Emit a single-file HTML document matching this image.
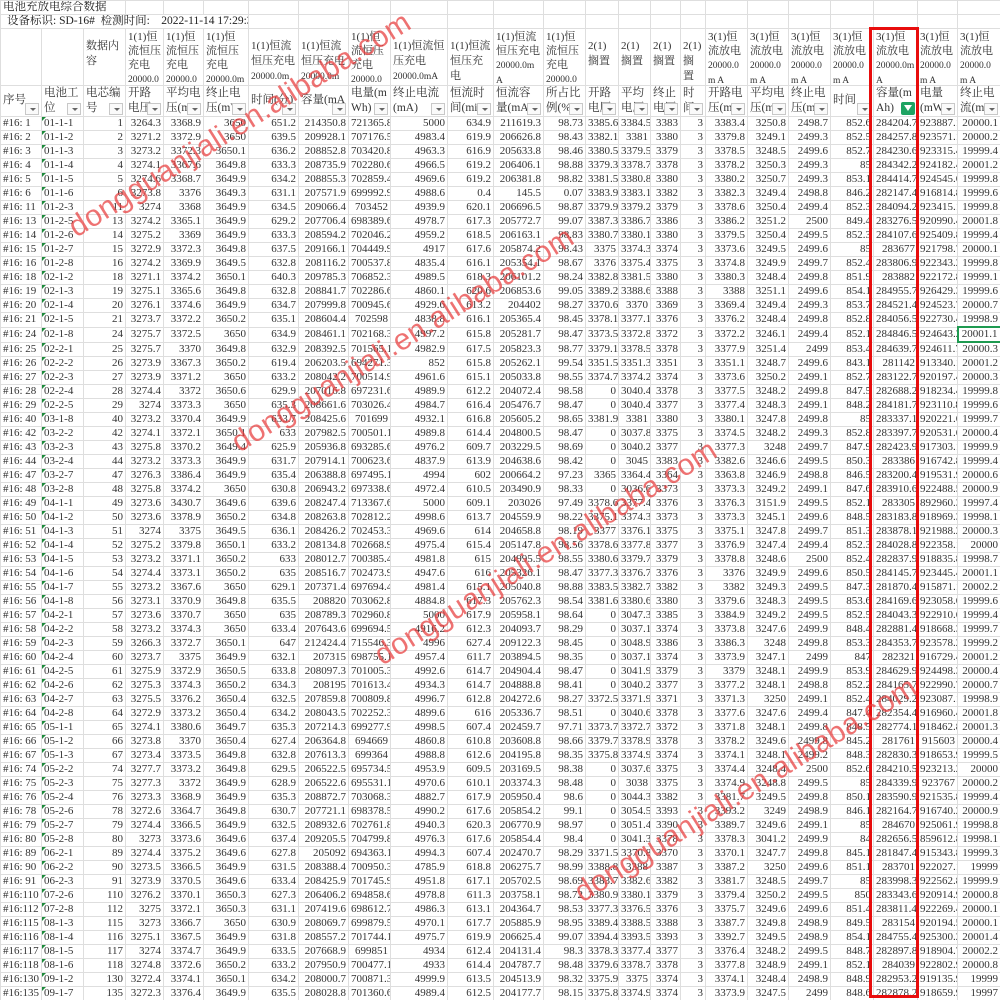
<!DOCTYPE html>
<html><head><meta charset="utf-8">
<style>
html,body{margin:0;padding:0;background:#fff;width:1000px;height:1000px;overflow:hidden;position:relative}
table{border-collapse:collapse;table-layout:fixed;position:absolute;left:0;top:0;width:1000px}
td{border:1px solid #dedede;padding:0 2px;font:11px "Liberation Serif","Noto Serif CJK SC",serif;color:#333;white-space:nowrap;overflow:hidden;text-align:right;height:14px;box-sizing:border-box;line-height:13px}
tr.t td{text-align:left;font-size:11.5px;color:#222;height:14px}
tr.h1 td{height:57px;padding:0 2px;vertical-align:top;text-align:left}
tr.h1 td div{height:56px;overflow:hidden;white-space:normal;word-break:break-all;font-size:11px;line-height:14px;padding-top:1px;box-sizing:border-box}
tr.h1 td div.m{padding-top:10px;line-height:15px}
tr.h1 td div small{font-size:9.5px}
tr.h2 td{height:31px;padding:0 2px;vertical-align:top;text-align:left}
tr.h2 td div{height:30px;overflow:hidden;position:relative;white-space:normal;word-break:break-all;font-size:11.5px;line-height:15px;padding-top:0}
tr.h2 td div.m{line-height:29px}
.f{position:absolute;right:0;bottom:1px;width:14px;height:12px;border:1px solid #c8c8c8;background:#fafafa;box-sizing:border-box}
.f:after{content:"";position:absolute;left:4px;top:4px;border-left:3px solid transparent;border-right:3px solid transparent;border-top:3px solid #666}
.g{position:absolute;right:0;bottom:1px;width:14px;height:13px;background:#1ea362;border-radius:2px}
.g:after{content:"";position:absolute;left:3px;top:3px;border-left:4px solid transparent;border-right:4px solid transparent;border-top:6px solid #fff}
td.l{text-align:left}
td.p{text-align:left;position:relative}
td.p:before{content:"";position:absolute;left:0;top:0;border-top:4px solid #1c8a3a;border-right:4px solid transparent}
.red{position:absolute;left:869px;top:27px;width:50px;height:971px;border:3px solid #e80d0d;box-sizing:border-box}
.wm{position:absolute;font:30px "Liberation Sans",sans-serif;color:rgba(232,60,60,0.72);white-space:nowrap;transform:translate(-50%,-50%) rotate(-32deg);letter-spacing:0.3px}
</style></head><body>
<table>
<colgroup><col style="width:41px"><col style="width:42px"><col style="width:42px"><col style="width:38px"><col style="width:40px"><col style="width:45px"><col style="width:50px"><col style="width:50px"><col style="width:42px"><col style="width:57px"><col style="width:46px"><col style="width:50px"><col style="width:42px"><col style="width:33px"><col style="width:32px"><col style="width:30px"><col style="width:25px"><col style="width:42px"><col style="width:41px"><col style="width:42px"><col style="width:43px"><col style="width:44px"><col style="width:40px"><col style="width:43px"></colgroup>
<tr class="t"><td colspan="3" style="border-right:none">电池充放电综合数据</td><td></td><td></td><td></td><td></td><td></td><td></td><td></td><td></td><td></td><td></td><td></td><td></td><td></td><td></td><td></td><td></td><td></td><td></td><td></td><td></td><td></td></tr>
<tr class="t"><td colspan="6" style="padding-left:6px">设备标识: SD-16#&nbsp; 检测时间: &nbsp;&nbsp; 2022-11-14 17:29:39</td><td></td><td></td><td></td><td></td><td></td><td></td><td></td><td></td><td></td><td></td><td></td><td></td><td></td><td></td><td></td><td></td><td></td><td></td></tr>
<tr class="h1"><td><div></div></td><td><div></div></td><td><div class="m">数据内容</div></td><td><div>1(1)恒流恒压充电<br><small>20000.0</small></div></td><td><div>1(1)恒流恒压充电<br><small>20000.0</small></div></td><td><div>1(1)恒流恒压充电<br><small>20000.0m A</small></div></td><td><div class="m">1(1)恒流恒压充电<br><small>20000.0mA</small></div></td><td><div class="m">1(1)恒流恒压充电<br><small>20000.0mA</small></div></td><td><div>1(1)恒流恒压充电<br><small>20000.0m</small></div></td><td><div class="m">1(1)恒流恒压充电<br><small>20000.0mA</small></div></td><td><div class="m">1(1)恒流恒压充电<br><small>20000.0mA</small></div></td><td><div>1(1)恒流恒压充电<br><small>20000.0m A</small></div></td><td><div>1(1)恒流恒压充电<br><small>20000.0m</small></div></td><td><div class="m">2(1)搁置</div></td><td><div class="m">2(1)搁置</div></td><td><div class="m">2(1)搁置</div></td><td><div class="m">2(1)搁置</div></td><td><div>3(1)恒流放电<br><small>20000.0m A</small></div></td><td><div>3(1)恒流放电<br><small>20000.0m A</small></div></td><td><div>3(1)恒流放电<br><small>20000.0m A</small></div></td><td><div>3(1)恒流放电<br><small>20000.0m A</small></div></td><td><div>3(1)恒流放电<br><small>20000.0m A</small></div></td><td><div>3(1)恒流放电<br><small>20000.0m A</small></div></td><td><div>3(1)恒流放电<br><small>20000.0m A</small></div></td></tr>
<tr class="h2"><td><div class="m">序号<i class="f"></i></div></td><td><div>电池工位<i class="f"></i></div></td><td><div>电芯编号<i class="f"></i></div></td><td><div>开路电压(mV)<i class="f"></i></div></td><td><div>平均电压(mV)<i class="f"></i></div></td><td><div>终止电压(mV)<i class="f"></i></div></td><td><div class="m">时间(分)<i class="f"></i></div></td><td><div class="m">容量(mAh)<i class="f"></i></div></td><td><div>电量(mWh)<i class="f"></i></div></td><td><div>终止电流(mA)<i class="f"></i></div></td><td><div>恒流时间(min)<i class="f"></i></div></td><td><div>恒流容量(mAh)<i class="f"></i></div></td><td><div>所占比例(%)<i class="f"></i></div></td><td><div>开路电压<i class="f"></i></div></td><td><div>平均电压<i class="f"></i></div></td><td><div>终止电压<i class="f"></i></div></td><td><div>时间(分)<i class="f"></i></div></td><td><div>开路电压(mV)<i class="f"></i></div></td><td><div>平均电压(mV)<i class="f"></i></div></td><td><div>终止电压(mV)<i class="f"></i></div></td><td><div class="m">时间(分)<i class="f"></i></div></td><td><div>容量(mAh)<i class="g"></i></div></td><td><div>电量(mWh)<i class="f"></i></div></td><td><div>终止电流(mA)<i class="f"></i></div></td></tr>
<tr><td class="l">#16: 1<td class="p">01-1-1<td>1<td>3264.3<td>3368.9<td>3650<td>651.2<td>214350.8<td>721365.8<td>5000<td>634.9<td>211619.3<td>98.73<td>3385.6<td>3384.5<td>3383<td>3<td>3383.4<td>3250.8<td>2498.7<td>852.6<td>284204.7<td>923887.1<td>20000.1</tr>
<tr><td class="l">#16: 2<td class="p">01-1-2<td>2<td>3271.2<td>3372.9<td>3650<td>639.5<td>209928.1<td>707176.5<td>4983.4<td>619.9<td>206626.8<td>98.43<td>3382.1<td>3381<td>3380<td>3<td>3379.8<td>3249.1<td>2499.3<td>852.5<td>284257.8<td>923571.1<td>20000.2</tr>
<tr><td class="l">#16: 3<td class="p">01-1-3<td>3<td>3273.2<td>3372.3<td>3650.1<td>636.2<td>208852.8<td>703420.8<td>4963.3<td>616.9<td>205633.8<td>98.46<td>3380.5<td>3379.5<td>3379<td>3<td>3378.5<td>3248.5<td>2499.6<td>852.7<td>284230.6<td>923315.4<td>19999.4</tr>
<tr><td class="l">#16: 4<td class="p">01-1-4<td>4<td>3274.1<td>3367.6<td>3649.8<td>633.3<td>208735.9<td>702280.6<td>4966.5<td>619.2<td>206406.1<td>98.88<td>3379.3<td>3378.7<td>3378<td>3<td>3378.2<td>3250.3<td>2499.3<td>85<td>284342.2<td>924182.4<td>20001.2</tr>
<tr><td class="l">#16: 5<td class="p">01-1-5<td>5<td>3274.6<td>3368.7<td>3649.9<td>634.2<td>208855.3<td>702859.4<td>4969.6<td>619.2<td>206381.8<td>98.82<td>3381.5<td>3380.8<td>3380<td>3<td>3380.2<td>3250.7<td>2499.3<td>853.1<td>284414.7<td>924545.6<td>19999.8</tr>
<tr><td class="l">#16: 6<td class="p">01-1-6<td>6<td>3273.8<td>3376<td>3649.3<td>631.1<td>207571.9<td>699992.9<td>4988.6<td>0.4<td>145.5<td>0.07<td>3383.9<td>3383.1<td>3382<td>3<td>3382.3<td>3249.4<td>2498.8<td>846.2<td>282147.4<td>916814.8<td>19999.6</tr>
<tr><td class="l">#16: 11<td class="p">01-2-3<td>11<td>3274<td>3368<td>3649.9<td>634.5<td>209066.4<td>703452<td>4939.9<td>620.1<td>206696.5<td>98.87<td>3379.9<td>3379.2<td>3379<td>3<td>3378.6<td>3250.4<td>2499.4<td>852.3<td>284094.2<td>923415.1<td>19999.8</tr>
<tr><td class="l">#16: 13<td class="p">01-2-5<td>13<td>3274.2<td>3365.1<td>3649.9<td>629.2<td>207706.4<td>698389.6<td>4978.7<td>617.3<td>205772.7<td>99.07<td>3387.3<td>3386.7<td>3386<td>3<td>3386.2<td>3251.2<td>2500<td>849.4<td>283276.5<td>920990.4<td>20001.8</tr>
<tr><td class="l">#16: 14<td class="p">01-2-6<td>14<td>3275.2<td>3369<td>3649.9<td>633.3<td>208594.2<td>702046.2<td>4959.2<td>618.5<td>206163.1<td>98.83<td>3380.7<td>3380.1<td>3380<td>3<td>3379.5<td>3250.4<td>2499.5<td>852.3<td>284107.6<td>925409.8<td>19999.4</tr>
<tr><td class="l">#16: 15<td class="p">01-2-7<td>15<td>3272.9<td>3372.3<td>3649.8<td>637.5<td>209166.1<td>704449.9<td>4917<td>617.6<td>205874.2<td>98.43<td>3375<td>3374.3<td>3374<td>3<td>3373.6<td>3249.5<td>2499.6<td>85<td>283677<td>921798.7<td>20000.1</tr>
<tr><td class="l">#16: 16<td class="p">01-2-8<td>16<td>3274.2<td>3369.9<td>3649.5<td>632.8<td>208116.2<td>700537.8<td>4835.4<td>616.1<td>205354.1<td>98.67<td>3376<td>3375.4<td>3375<td>3<td>3374.8<td>3249.9<td>2499.7<td>852.4<td>283806.9<td>922343.2<td>19999.8</tr>
<tr><td class="l">#16: 18<td class="p">02-1-2<td>18<td>3271.1<td>3374.2<td>3650.1<td>640.3<td>209785.3<td>706852.3<td>4989.5<td>618.3<td>206101.2<td>98.24<td>3382.8<td>3381.5<td>3380<td>3<td>3380.3<td>3248.4<td>2499.8<td>851.9<td>283882<td>922172.8<td>19999.1</tr>
<tr><td class="l">#16: 19<td class="p">02-1-3<td>19<td>3275.1<td>3365.6<td>3649.8<td>632.8<td>208841.7<td>702286.6<td>4860.1<td>620.6<td>206853.6<td>99.05<td>3389.2<td>3388.6<td>3388<td>3<td>3388<td>3251.1<td>2499.6<td>854.1<td>284955.7<td>926429.3<td>19999.6</tr>
<tr><td class="l">#16: 20<td class="p">02-1-4<td>20<td>3276.1<td>3374.6<td>3649.9<td>634.7<td>207999.8<td>700945.6<td>4929.6<td>613.2<td>204402<td>98.27<td>3370.6<td>3370<td>3369<td>3<td>3369.4<td>3249.4<td>2499.3<td>853.7<td>284521.4<td>924523.7<td>20000.7</tr>
<tr><td class="l">#16: 21<td class="p">02-1-5<td>21<td>3273.7<td>3372.2<td>3650.2<td>635.1<td>208604.4<td>702598<td>4838.8<td>616.1<td>205365.4<td>98.45<td>3378.1<td>3377.1<td>3376<td>3<td>3376.2<td>3248.4<td>2499.8<td>852.8<td>284056.5<td>922730.4<td>19998.9</tr>
<tr><td class="l">#16: 24<td class="p">02-1-8<td>24<td>3275.7<td>3372.5<td>3650<td>634.9<td>208461.1<td>702168.3<td>4997.2<td>615.8<td>205281.7<td>98.47<td>3373.5<td>3372.8<td>3372<td>3<td>3372.2<td>3246.1<td>2499.4<td>852.1<td>284846.5<td>924643.2<td style="border:2px solid #1e9a50">20001.1</tr>
<tr><td class="l">#16: 25<td class="p">02-2-1<td>25<td>3275.7<td>3370<td>3649.8<td>632.9<td>208392.5<td>701565.1<td>4982.9<td>617.5<td>205823.3<td>98.77<td>3379.1<td>3378.5<td>3378<td>3<td>3377.9<td>3251.4<td>2499<td>853.4<td>284639.7<td>924611.7<td>20000.3</tr>
<tr><td class="l">#16: 26<td class="p">02-2-2<td>26<td>3273.9<td>3367.3<td>3650.2<td>619.4<td>206203.5<td>694271.3<td>852<td>615.8<td>205262.1<td>99.54<td>3351.5<td>3351.3<td>3351<td>3<td>3351.1<td>3248.7<td>2499.6<td>843.1<td>281142<td>913340.1<td>20001.2</tr>
<tr><td class="l">#16: 27<td class="p">02-2-3<td>27<td>3273.9<td>3371.2<td>3650<td>633.2<td>208042.2<td>700514.9<td>4961.6<td>615.1<td>205033.8<td>98.55<td>3374.7<td>3374.2<td>3374<td>3<td>3373.6<td>3250.2<td>2499.1<td>852.7<td>283122.7<td>920197.4<td>20000.3</tr>
<tr><td class="l">#16: 28<td class="p">02-2-4<td>28<td>3274.4<td>3372<td>3650.6<td>629.9<td>207016.8<td>697231.6<td>4989.9<td>612.2<td>204072.4<td>98.58<td>0<td>3040.4<td>3378<td>3<td>3377.5<td>3248.2<td>2499.8<td>847.5<td>282688.2<td>918234.4<td>19999.8</tr>
<tr><td class="l">#16: 29<td class="p">02-2-5<td>29<td>3274<td>3373.3<td>3650<td>635.3<td>208661.6<td>703026.4<td>4984.7<td>616.4<td>205476.7<td>98.47<td>0<td>3040.4<td>3377<td>3<td>3377.4<td>3248.3<td>2499.1<td>848.2<td>284181.7<td>923110.8<td>19999.6</tr>
<tr><td class="l">#16: 40<td class="p">03-1-8<td>40<td>3273.2<td>3370.4<td>3649.9<td>633.7<td>208425.6<td>701699<td>4932.1<td>616.8<td>205605.2<td>98.65<td>3381.9<td>3381<td>3380<td>3<td>3380.1<td>3247.8<td>2499.8<td>85<td>283337.1<td>920221.6<td>19999.7</tr>
<tr><td class="l">#16: 42<td class="p">03-2-2<td>42<td>3274.1<td>3372.1<td>3650.1<td>633<td>207982.5<td>700501.1<td>4989.8<td>614.4<td>204800.5<td>98.47<td>0<td>3037.8<td>3375<td>3<td>3374.5<td>3248.2<td>2499.3<td>852.8<td>283397.7<td>920531.6<td>20000.4</tr>
<tr><td class="l">#16: 43<td class="p">03-2-3<td>43<td>3275.8<td>3370.2<td>3649.4<td>625.9<td>205936.8<td>693285.6<td>4976.2<td>609.7<td>203229.5<td>98.69<td>0<td>3040.2<td>3377<td>3<td>3377.3<td>3248<td>2499.7<td>847.9<td>282423.9<td>917303.1<td>19999.9</tr>
<tr><td class="l">#16: 44<td class="p">03-2-4<td>44<td>3273.2<td>3373.3<td>3649.9<td>631.7<td>207914.1<td>700623.6<td>4837.9<td>613.9<td>204638.6<td>98.42<td>0<td>3045<td>3383<td>3<td>3382.6<td>3246.6<td>2499.5<td>850.3<td>283386<td>916742.8<td>19999.4</tr>
<tr><td class="l">#16: 47<td class="p">03-2-7<td>47<td>3276.3<td>3386.4<td>3649.9<td>635.4<td>206388.8<td>697495.1<td>4994<td>602<td>200664.2<td>97.23<td>3365<td>3364.4<td>3364<td>3<td>3363.8<td>3246.9<td>2498.8<td>846.5<td>283200.4<td>919531.9<td>20000.6</tr>
<tr><td class="l">#16: 48<td class="p">03-2-8<td>48<td>3275.8<td>3374.2<td>3650<td>630.8<td>206943.2<td>697338.6<td>4972.4<td>610.5<td>203490.9<td>98.33<td>0<td>3036.6<td>3373<td>3<td>3373.3<td>3249.2<td>2499.1<td>847.6<td>283910.6<td>922488.5<td>20000.9</tr>
<tr><td class="l">#16: 49<td class="p">04-1-1<td>49<td>3273.6<td>3430.7<td>3649.6<td>639.6<td>208247.4<td>713367.6<td>5000<td>609.1<td>203026<td>97.49<td>3378.6<td>3377.4<td>3376<td>3<td>3376.3<td>3151.9<td>2499.5<td>852.1<td>283305<td>892960.3<td>19997.4</tr>
<tr><td class="l">#16: 50<td class="p">04-1-2<td>50<td>3273.6<td>3378.9<td>3650.2<td>634.8<td>208263.8<td>702812.2<td>4998.6<td>613.7<td>204559.9<td>98.22<td>3375.1<td>3374.3<td>3373<td>3<td>3373.3<td>3245.1<td>2499.6<td>848.5<td>283183.8<td>918969.3<td>19998.1</tr>
<tr><td class="l">#16: 51<td class="p">04-1-3<td>51<td>3274<td>3375<td>3649.5<td>636.1<td>208426.2<td>702453.3<td>4969.6<td>614<td>204658.8<td>98.19<td>3377<td>3376.1<td>3375<td>3<td>3375.1<td>3247.8<td>2499.7<td>851.3<td>283878.1<td>921988.2<td>20000.3</tr>
<tr><td class="l">#16: 52<td class="p">04-1-4<td>52<td>3275.2<td>3379.8<td>3650.1<td>633.2<td>208134.8<td>702668.9<td>4975.4<td>615.4<td>205147.8<td>98.56<td>3378.6<td>3377.8<td>3377<td>3<td>3376.9<td>3247.4<td>2499.4<td>852.3<td>284028.8<td>922358.1<td>20000</tr>
<tr><td class="l">#16: 53<td class="p">04-1-5<td>53<td>3273.2<td>3371.1<td>3650.2<td>633<td>208012.7<td>700385.4<td>4981.8<td>615<td>204995.5<td>98.55<td>3380.6<td>3379.7<td>3379<td>3<td>3378.8<td>3248.6<td>2500<td>852.4<td>282837.9<td>918835.8<td>19998.7</tr>
<tr><td class="l">#16: 54<td class="p">04-1-6<td>54<td>3274.4<td>3373.1<td>3650.2<td>635<td>208516.7<td>702473.9<td>4947.6<td>616<td>205326.1<td>98.47<td>3377.3<td>3376.7<td>3376<td>3<td>3376<td>3249.9<td>2499.6<td>850.5<td>284145.7<td>923445.4<td>20001.1</tr>
<tr><td class="l">#16: 55<td class="p">04-1-7<td>55<td>3273.2<td>3367.6<td>3650<td>629.1<td>207371.4<td>697694.4<td>4981.4<td>615.1<td>205040.8<td>98.88<td>3383.5<td>3382.7<td>3382<td>3<td>3382<td>3249.3<td>2499.5<td>847.3<td>281870.4<td>915871.1<td>20002.2</tr>
<tr><td class="l">#16: 56<td class="p">04-1-8<td>56<td>3273.1<td>3370.9<td>3649.8<td>635.5<td>208820<td>703062.8<td>4884.8<td>617.3<td>205762.3<td>98.54<td>3381.6<td>3380.6<td>3380<td>3<td>3379.6<td>3248.3<td>2499.5<td>853.6<td>284169.6<td>923058.6<td>19999.6</tr>
<tr><td class="l">#16: 57<td class="p">04-2-1<td>57<td>3273.6<td>3370.7<td>3650<td>635<td>208789.3<td>702960.8<td>5000<td>617.9<td>205958.1<td>98.64<td>0<td>3047.3<td>3385<td>3<td>3384.9<td>3249.2<td>2499.5<td>852.5<td>284043.3<td>922910.6<td>19999.4</tr>
<tr><td class="l">#16: 58<td class="p">04-2-2<td>58<td>3273.2<td>3374.3<td>3650<td>633.4<td>207643.6<td>699694.5<td>4916.2<td>612.3<td>204093.7<td>98.29<td>0<td>3037.1<td>3374<td>3<td>3373.8<td>3247.6<td>2499.9<td>848.4<td>282881.4<td>918668.3<td>19999.7</tr>
<tr><td class="l">#16: 59<td class="p">04-2-3<td>59<td>3266.3<td>3372.7<td>3650.1<td>647<td>212424.4<td>715546.3<td>4996<td>627.4<td>209122.3<td>98.45<td>0<td>3048.9<td>3386<td>3<td>3386.3<td>3248<td>2499.8<td>853.3<td>284353.7<td>923578.2<td>19999.2</tr>
<tr><td class="l">#16: 60<td class="p">04-2-4<td>60<td>3273.7<td>3375<td>3649.9<td>632.1<td>207315<td>698755.1<td>4957.4<td>611.7<td>203894.5<td>98.35<td>0<td>3037.1<td>3374<td>3<td>3373.9<td>3247.1<td>2499<td>847<td>282321<td>916729.4<td>20001.2</tr>
<tr><td class="l">#16: 61<td class="p">04-2-5<td>61<td>3275.9<td>3372.9<td>3650.5<td>633.8<td>208097.3<td>701005.3<td>4992.6<td>614.7<td>204904.4<td>98.47<td>0<td>3041.9<td>3379<td>3<td>3379<td>3248.1<td>2499.9<td>853.9<td>284629.9<td>924498.3<td>20000.4</tr>
<tr><td class="l">#16: 62<td class="p">04-2-6<td>62<td>3275.3<td>3374.3<td>3650.2<td>634.3<td>208195<td>701613.4<td>4934.3<td>614.7<td>204888.8<td>98.41<td>0<td>3040.2<td>3377<td>3<td>3377.2<td>3248.1<td>2498.8<td>852.2<td>284165.7<td>922990.7<td>20000.7</tr>
<tr><td class="l">#16: 63<td class="p">04-2-7<td>63<td>3275.5<td>3376.2<td>3650.4<td>632.5<td>207859.8<td>700809.8<td>4996.7<td>612.8<td>204272.6<td>98.27<td>3372.5<td>3371.9<td>3371<td>3<td>3371.3<td>3250<td>2499.1<td>852.4<td>284029.2<td>923087.1<td>19998.9</tr>
<tr><td class="l">#16: 64<td class="p">04-2-8<td>64<td>3272.9<td>3373.2<td>3650.4<td>634.2<td>208043.5<td>702252.3<td>4899.6<td>616<td>205336.7<td>98.51<td>0<td>3040.6<td>3378<td>3<td>3377.6<td>3247.6<td>2499.4<td>847.4<td>282354.4<td>916960.4<td>20001.8</tr>
<tr><td class="l">#16: 65<td class="p">05-1-1<td>65<td>3274.1<td>3380.6<td>3649.7<td>635.3<td>207214.3<td>699277.9<td>4998.5<td>607.4<td>202459.7<td>97.71<td>3373.7<td>3372.7<td>3372<td>3<td>3371.8<td>3248.1<td>2499.8<td>848.5<td>282774.1<td>918462.8<td>20001.3</tr>
<tr><td class="l">#16: 66<td class="p">05-1-2<td>66<td>3273.8<td>3370<td>3650.4<td>627.4<td>206364.8<td>694669<td>4860.8<td>610.8<td>203608.8<td>98.66<td>3379.7<td>3378.9<td>3378<td>3<td>3378.2<td>3249.6<td>2499.8<td>845.2<td>281761<td>915603<td>20000.4</tr>
<tr><td class="l">#16: 67<td class="p">05-1-3<td>67<td>3273.4<td>3373.5<td>3649.8<td>632.8<td>207613.3<td>699364<td>4988.8<td>612.6<td>204195.8<td>98.35<td>3375.8<td>3374.9<td>3374<td>3<td>3374.1<td>3248.1<td>2499.2<td>848.3<td>282830.3<td>918653.9<td>19999.5</tr>
<tr><td class="l">#16: 74<td class="p">05-2-2<td>74<td>3277.7<td>3373.2<td>3649.8<td>629.5<td>206522.5<td>695734.5<td>4953.9<td>609.5<td>203169.5<td>98.38<td>0<td>3037.6<td>3375<td>3<td>3374.4<td>3248.4<td>2500<td>852.6<td>284210.5<td>923213.2<td>20000</tr>
<tr><td class="l">#16: 75<td class="p">05-2-3<td>75<td>3277.3<td>3372<td>3649.9<td>628.9<td>206522.6<td>695531.1<td>4970.6<td>610.1<td>203374.3<td>98.48<td>0<td>3038<td>3375<td>3<td>3374.9<td>3248.8<td>2499.5<td>85<td>284339.9<td>923767<td>20000.2</tr>
<tr><td class="l">#16: 76<td class="p">05-2-4<td>76<td>3273.3<td>3368.9<td>3649.9<td>635.3<td>208872.7<td>703068.3<td>4882.7<td>617.9<td>205950.4<td>98.6<td>0<td>3044.3<td>3382<td>3<td>3381.7<td>3249.5<td>2499.8<td>850.1<td>283590.9<td>921535.8<td>19999.4</tr>
<tr><td class="l">#16: 78<td class="p">05-2-6<td>78<td>3272.6<td>3364.7<td>3649.8<td>630.7<td>207721.1<td>698378.5<td>4990.2<td>617.6<td>205854.2<td>99.1<td>0<td>3054.5<td>3393<td>3<td>3393.2<td>3249<td>2498.9<td>846.1<td>282164.7<td>916740.2<td>20000.9</tr>
<tr><td class="l">#16: 79<td class="p">05-2-7<td>79<td>3274.4<td>3366.5<td>3649.9<td>632.5<td>208932.6<td>702761.8<td>4940.3<td>620.3<td>206770.9<td>98.97<td>0<td>3051.4<td>3390<td>3<td>3389.7<td>3249.6<td>2499.1<td>85<td>284670<td>925061.9<td>19998.8</tr>
<tr><td class="l">#16: 80<td class="p">05-2-8<td>80<td>3273<td>3373.6<td>3649.6<td>637.4<td>209205.5<td>704799.8<td>4976.3<td>617.6<td>205854.4<td>98.4<td>0<td>3041.3<td>3378<td>3<td>3378.3<td>3041.2<td>2499.9<td>84<td>282656.5<td>859612.8<td>19998.1</tr>
<tr><td class="l">#16: 89<td class="p">06-2-1<td>89<td>3274.4<td>3375.2<td>3649.6<td>627.8<td>205092<td>694363.1<td>4994.3<td>607.4<td>202470.7<td>98.29<td>3371.5<td>3370.8<td>3370<td>3<td>3370.1<td>3247.7<td>2499.8<td>845.1<td>281847.4<td>915343.8<td>19999.3</tr>
<tr><td class="l">#16: 90<td class="p">06-2-2<td>90<td>3273.5<td>3366.5<td>3649.9<td>631.5<td>208388.4<td>700950.3<td>4785.9<td>618.8<td>206275.7<td>98.99<td>3388.8<td>3388<td>3387<td>3<td>3387.2<td>3250<td>2499.6<td>851.1<td>283701<td>922027.1<td>19999</tr>
<tr><td class="l">#16: 91<td class="p">06-2-3<td>91<td>3273.9<td>3370.5<td>3649.6<td>633.4<td>208425.9<td>701745.9<td>4951.8<td>617.1<td>205702.5<td>98.69<td>3383.7<td>3382.6<td>3382<td>3<td>3381.7<td>3248.5<td>2499.7<td>85<td>283998.3<td>922562.8<td>19999.9</tr>
<tr><td class="l">#16:110<td class="p">07-2-6<td>110<td>3276.2<td>3370.1<td>3650.3<td>627.3<td>206406.2<td>694858.6<td>4978.8<td>611.3<td>203758.1<td>98.72<td>3380.9<td>3380.1<td>3379<td>3<td>3379.4<td>3250.2<td>2499.5<td>850<td>283343.6<td>920914.9<td>20000.8</tr>
<tr><td class="l">#16:112<td class="p">07-2-8<td>112<td>3275<td>3372.1<td>3650.3<td>631.1<td>207419.6<td>698612.7<td>4986.3<td>613.1<td>204364.7<td>98.53<td>3377.3<td>3376.5<td>3376<td>3<td>3375.7<td>3249.6<td>2499.6<td>851.4<td>283811.4<td>922269.4<td>20000.1</tr>
<tr><td class="l">#16:115<td class="p">08-1-3<td>115<td>3273<td>3366.7<td>3650<td>630.9<td>208069.7<td>699879.5<td>4970.1<td>617.7<td>205885.9<td>98.95<td>3389.4<td>3388.5<td>3388<td>3<td>3387.7<td>3249.8<td>2498.9<td>849.5<td>283154<td>920194.5<td>20000.1</tr>
<tr><td class="l">#16:116<td class="p">08-1-4<td>116<td>3275.1<td>3367.5<td>3649.9<td>631.8<td>208557.2<td>701744.1<td>4975.7<td>619.9<td>206625.4<td>99.07<td>3394.4<td>3393.5<td>3393<td>3<td>3392.7<td>3249.5<td>2498.9<td>854.1<td>284755.4<td>925300.2<td>20001.4</tr>
<tr><td class="l">#16:117<td class="p">08-1-5<td>117<td>3274<td>3374.7<td>3649.9<td>633.5<td>207668.9<td>699851<td>4934<td>612.4<td>204131.4<td>98.3<td>3378.3<td>3377.4<td>3377<td>3<td>3376.4<td>3248.2<td>2499.5<td>848.7<td>282897.8<td>918904.7<td>20002.2</tr>
<tr><td class="l">#16:118<td class="p">08-1-6<td>118<td>3274.8<td>3372.6<td>3650.2<td>633.2<td>207950.9<td>700477.1<td>4933<td>614.4<td>204787.7<td>98.48<td>3379.6<td>3378.7<td>3378<td>3<td>3377.8<td>3248.9<td>2499.1<td>852.1<td>284039<td>922802.9<td>20000.8</tr>
<tr><td class="l">#16:130<td class="p">09-1-2<td>130<td>3272.4<td>3374.1<td>3650.1<td>634.2<td>208000.7<td>700871.3<td>4999.9<td>613.5<td>204513.9<td>98.32<td>3375.9<td>3375<td>3374<td>3<td>3374.1<td>3248.4<td>2498.9<td>848.9<td>282953.2<td>919135.9<td>19999</tr>
<tr><td class="l">#16:135<td class="p">09-1-7<td>135<td>3272.3<td>3376.4<td>3649.9<td>635.5<td>208028.8<td>701360.6<td>4989.4<td>612.5<td>204177.7<td>98.15<td>3375.8<td>3374.9<td>3374<td>3<td>3373.9<td>3247.5<td>2499<td>848.6<td>282878.2<td>918659.9<td>19997</tr>
</table>
<div class="red"></div>
<div class="wm" style="left:240px;top:125px">dongguanjiali.en.alibaba.com</div>
<div class="wm" style="left:403px;top:340px">dongguanjiali.en.alibaba.com</div>
<div class="wm" style="left:546px;top:553px">dongguanjiali.en.alibaba.com</div>
<div class="wm" style="left:746px;top:790px">dongguanjiali.en.alibaba.com</div>
</body></html>
